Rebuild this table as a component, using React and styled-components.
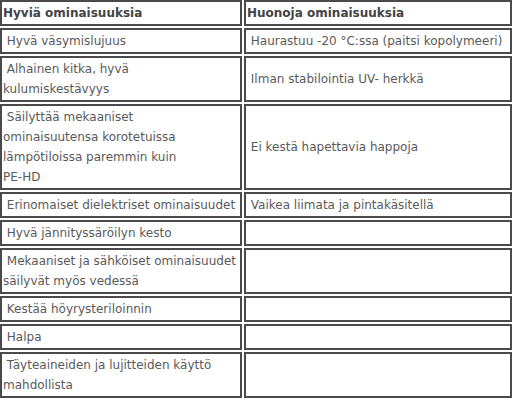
import React from 'react';
import styled, { createGlobalStyle } from 'styled-components';

const GlobalStyle = createGlobalStyle`
  body {
    margin: 0;
    background: #fff;
  }
`;

// rivinvaihdot kuten alkuperäisessä taulukossa
const rows = [
  ['\u00a0Hyvä väsymislujuus', '\u00a0Haurastuu -20 °C:ssa (paitsi kopolymeeri)'],
  ['\u00a0Alhainen kitka, hyvä\nkulumiskestävyys', '\u00a0Ilman stabilointia UV- herkkä'],
  ['\u00a0Säilyttää mekaaniset\nominaisuutensa korotetuissa\nlämpötiloissa paremmin kuin\nPE-HD', '\u00a0Ei kestä hapettavia happoja'],
  ['\u00a0Erinomaiset dielektriset ominaisuudet', '\u00a0Vaikea liimata ja pintakäsitellä'],
  ['\u00a0Hyvä jännityssäröilyn kesto', ''],
  ['\u00a0Mekaaniset ja sähköiset ominaisuudet\nsäilyvät myös vedessä', ''],
  ['\u00a0Kestää höyrysteriloinnin', ''],
  ['\u00a0Halpa', ''],
  ['\u00a0Täyteaineiden ja lujitteiden käyttö\nmahdollista', ''],
];

const Table = styled.div`
  display: grid;
  grid-template-columns: 242px 268px;
  gap: 2px;
  width: 512px;
  font-family: "DejaVu Sans", Verdana, sans-serif;
  font-size: 12px;
  line-height: 20px;
  color: #5a5a5a;
`;

const Cell = styled.div`
  display: flex;
  align-items: center;
  min-height: 20px;
  padding: 1px;
  border: 2px solid #4a4a4a;
  white-space: pre-line;
  font-weight: ${p => (p.head ? 'bold' : 'normal')};
  color: ${p => (p.head ? '#444' : '#5a5a5a')};
`;

function App() {
  return (
    <>
      <GlobalStyle />
      <Table>
        <Cell head>Hyviä ominaisuuksia</Cell>
        <Cell head>Huonoja ominaisuuksia</Cell>
        {rows.map((row, i) => (
          <React.Fragment key={i}>
            <Cell>{row[0]}</Cell>
            <Cell>{row[1]}</Cell>
          </React.Fragment>
        ))}
      </Table>
    </>
  );
}

export default App;
